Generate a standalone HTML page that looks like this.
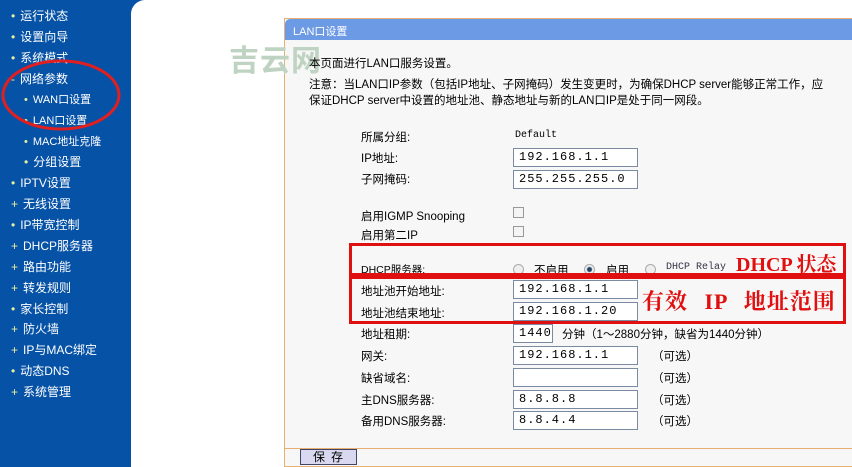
<!DOCTYPE html>
<html><head><meta charset="utf-8"><style>
*{margin:0;padding:0;box-sizing:border-box}
body{width:852px;height:467px;background:#fff;position:relative;overflow:hidden;font-family:"Liberation Sans","Noto Sans CJK SC",sans-serif;font-size:12px;color:#000}
.side{position:absolute;left:0;top:0;width:131px;height:467px;background:#0652a6}
.corner{position:absolute;left:131px;top:0;width:14px;height:14px;background:#0652a6}
.corner:after{content:"";position:absolute;left:0;top:0;width:28px;height:28px;background:#fff;border-radius:14px 0 0 0}
.it{position:absolute;color:#fff;font-size:12px;white-space:nowrap}
.it b{font-weight:normal;color:#e8f0a0;margin-right:5px}
.wm{position:absolute;left:229px;top:36px;font-size:30px;color:#bfd3c2;font-weight:bold;letter-spacing:1px}
.panel{position:absolute;left:284px;top:18px;width:570px;height:449px;background:#f7f7f7;border:1px solid #e8b070;border-right:none}
.hd{height:21px;background:#6c9ae4;color:#fff;font-size:11px;padding:4px 0 0 8px;border-radius:5px 0 0 0}
.t{position:absolute;white-space:nowrap;font-size:11.5px}
.in{position:absolute;width:125px;height:19px;background:#fff;border:1px solid #7a8aa0;font-family:"Liberation Mono",monospace;font-size:12px;padding:1px 5px;letter-spacing:1px}
.cb{position:absolute;width:11px;height:11px;border:1px solid #999;background:#f4f4f4}
.rd{position:absolute;width:11px;height:11px;border:1px solid #aaa;border-radius:50%;background:#eee}
.red{position:absolute;border:3px solid #e01010}
.rt{position:absolute;color:#e01010;font-family:"Liberation Serif","Noto Serif CJK SC",serif;white-space:nowrap;font-weight:bold}
</style></head><body>
<div class="side"></div><div class="corner"></div>
<div class="it" style="left:11px;top:7px"><b>•</b>运行状态</div>
<div class="it" style="left:11px;top:28px"><b>•</b>设置向导</div>
<div class="it" style="left:11px;top:49px"><b>•</b>系统模式</div>
<div class="it" style="left:11px;top:70px"><b>-</b>网络参数</div>
<div class="it" style="left:24px;top:91px;font-size:11px"><b>•</b>WAN口设置</div>
<div class="it" style="left:24px;top:112px;font-size:11px"><b>•</b>LAN口设置</div>
<div class="it" style="left:24px;top:133px;font-size:11px"><b>•</b>MAC地址克隆</div>
<div class="it" style="left:24px;top:153px"><b>•</b>分组设置</div>
<div class="it" style="left:11px;top:174px"><b>•</b>IPTV设置</div>
<div class="it" style="left:11px;top:195px"><b>+</b>无线设置</div>
<div class="it" style="left:11px;top:216px"><b>•</b>IP带宽控制</div>
<div class="it" style="left:11px;top:237px"><b>+</b>DHCP服务器</div>
<div class="it" style="left:11px;top:258px"><b>+</b>路由功能</div>
<div class="it" style="left:11px;top:279px"><b>+</b>转发规则</div>
<div class="it" style="left:11px;top:300px"><b>•</b>家长控制</div>
<div class="it" style="left:11px;top:320px"><b>+</b>防火墙</div>
<div class="it" style="left:11px;top:341px"><b>+</b>IP与MAC绑定</div>
<div class="it" style="left:11px;top:362px"><b>•</b>动态DNS</div>
<div class="it" style="left:11px;top:383px"><b>+</b>系统管理</div>
<svg style="position:absolute;left:0;top:58px" width="130" height="76"><ellipse cx="61" cy="37" rx="58" ry="34" fill="none" stroke="#e02020" stroke-width="3"/></svg>
<div class="panel"><div class="hd">LAN口设置</div>
<div style="position:absolute;left:0;right:0;top:429px;border-top:1px solid #e8b070"></div>
<div style="position:absolute;left:15px;top:430px;width:57px;height:16px;background:#d8d8f0;border:1px solid #446;font-size:12px;text-align:center;letter-spacing:6px;padding-left:5px;line-height:14px">保存</div>
</div>
<div class="wm">吉云网</div>
<div class="t" style="left:309px;top:55px">本页面进行LAN口服务设置。</div>
<div class="t" style="left:309px;top:76px">注意：当LAN口IP参数（包括IP地址、子网掩码）发生变更时，为确保DHCP server能够正常工作，应</div>
<div class="t" style="left:309px;top:92px">保证DHCP server中设置的地址池、静态地址与新的LAN口IP是处于同一网段。</div>
<div class="t" style="left:361px;top:129px">所属分组:</div><div class="t" style="left:515px;top:130px;font-family:'Liberation Mono',monospace;font-size:10px">Default</div>
<div class="t" style="left:361px;top:150px">IP地址:</div><div class="in" style="left:513px;top:148px">192.168.1.1</div>
<div class="t" style="left:361px;top:171px">子网掩码:</div><div class="in" style="left:513px;top:170px">255.255.255.0</div>
<div class="t" style="left:361px;top:208px">启用IGMP Snooping</div><div class="cb" style="left:513px;top:207px"></div>
<div class="t" style="left:361px;top:227px">启用第二IP</div><div class="cb" style="left:513px;top:226px"></div>
<div class="t" style="left:361px;top:262px;font-size:10.5px">DHCP服务器:</div>
<div class="rd" style="left:513px;top:264px"></div><div class="t" style="left:534px;top:262px">不启用</div>
<div class="rd" style="left:584px;top:264px;background:radial-gradient(#246 2px,#eee 3px)"></div><div class="t" style="left:606px;top:262px">启用</div>
<div class="rd" style="left:645px;top:264px"></div><div class="t" style="left:666px;top:262px;font-family:'Liberation Mono',monospace;font-size:10px;color:#334">DHCP Relay</div>
<div class="t" style="left:361px;top:283px">地址池开始地址:</div><div class="in" style="left:513px;top:280px">192.168.1.1</div>
<div class="t" style="left:361px;top:305px">地址池结束地址:</div><div class="in" style="left:513px;top:302px">192.168.1.20</div>
<div class="t" style="left:361px;top:326px">地址租期:</div><div class="in" style="left:513px;top:324px;width:40px">1440</div><div class="t" style="left:562px;top:326px">分钟（1～2880分钟，缺省为1440分钟）</div>
<div class="t" style="left:361px;top:348px">网关:</div><div class="in" style="left:513px;top:346px">192.168.1.1</div><div class="t" style="left:652px;top:348px">（可选）</div>
<div class="t" style="left:361px;top:370px">缺省域名:</div><div class="in" style="left:513px;top:368px"></div><div class="t" style="left:652px;top:370px">（可选）</div>
<div class="t" style="left:361px;top:392px">主DNS服务器:</div><div class="in" style="left:513px;top:390px">8.8.8.8</div><div class="t" style="left:652px;top:392px">（可选）</div>
<div class="t" style="left:361px;top:413px">备用DNS服务器:</div><div class="in" style="left:513px;top:411px">8.8.4.4</div><div class="t" style="left:652px;top:413px">（可选）</div>
<div class="red" style="left:349px;top:243px;width:497px;height:33px"></div>
<div class="red" style="left:349px;top:276px;width:497px;height:48px"></div>
<div class="rt" style="left:736px;top:248px;font-size:20px">DHCP 状态</div>
<div class="rt" style="left:642px;top:285px;font-size:22px;word-spacing:10px;letter-spacing:1px">有效 IP 地址范围</div>
</body></html>
